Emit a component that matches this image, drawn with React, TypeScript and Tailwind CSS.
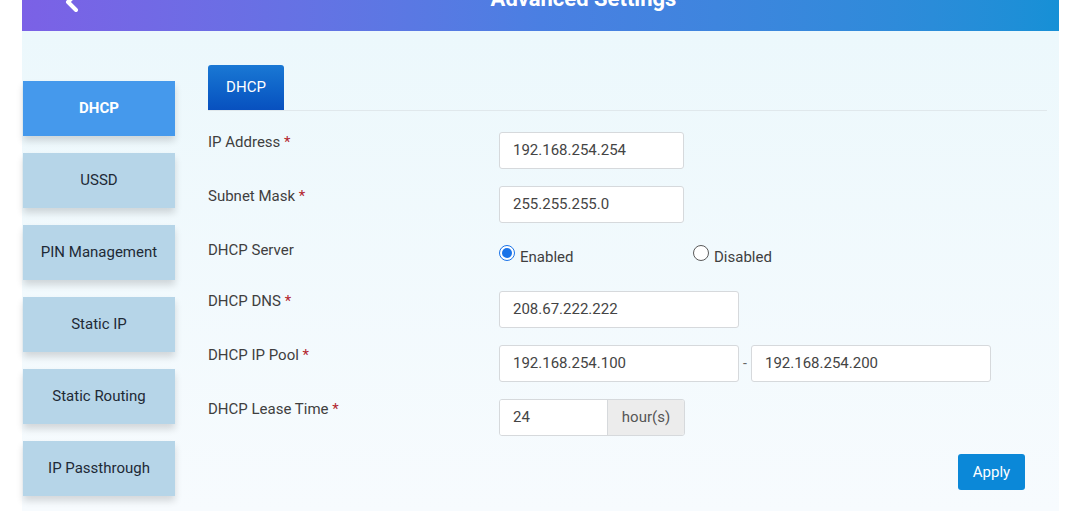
import { ChevronLeft } from "lucide-react";

const menu = ["DHCP", "USSD", "PIN Management", "Static IP", "Static Routing", "IP Passthrough"];

function Label({ text, required }: { text: string; required?: boolean }) {
  return (
    <div className="w-[291px] shrink-0 text-[15px] leading-5 text-[#3f3f3f]">
      {text}
      {required && <span className="text-[#b3262e]"> *</span>}
    </div>
  );
}

function Field({ value, width }: { value: string; width: string }) {
  return (
    <div
      className={`${width} h-[37px] flex items-center px-[13px] bg-white border border-[#d6d9dc] rounded-[3px] text-[15px] text-[#444]`}
    >
      {value}
    </div>
  );
}

function Radio({ checked, label }: { checked?: boolean; label: string }) {
  return (
    <div className="flex items-start gap-[5px]">
      <div
        className={`mt-[5px] w-[16px] h-[16px] rounded-full border flex items-center justify-center bg-white ${
          checked ? "border-[#1a73e8]" : "border-[#5a5a5a]"
        }`}
      >
        {checked && <div className="w-[10px] h-[10px] rounded-full bg-[#1a73e8]" />}
      </div>
      <span className="mt-[7px] text-[15px] leading-5 text-[#3f3f3f]">{label}</span>
    </div>
  );
}

export default function App() {
  return (
    <div className="w-[1079px] h-[511px] overflow-hidden bg-white font-['Roboto',sans-serif]">
      <div className="mx-[22px] w-[1037px]">
        {/* header, scrolled partly out of view */}
        <div className="-mt-[34px] h-[65px] relative flex items-center justify-center pl-[86px] bg-gradient-to-r from-[#7b61e6] via-[#4a7fe2] to-[#1690d6]">
          <ChevronLeft className="absolute left-[34px] top-[20px] text-white" size={32} strokeWidth={3} />
          <h1 className="text-[22px] font-bold text-white">Advanced Settings</h1>
        </div>

        <div className="h-[480px] bg-gradient-to-b from-[#ecf8fc] to-[#f7fbfe] flex">
          {/* side menu */}
          <div className="w-[153px] pl-px pt-[50px] flex flex-col gap-[17px]">
            {menu.map((m, i) => (
              <div
                key={m}
                className={`h-[55px] flex items-center justify-center text-[15px] shadow-[0_5px_7px_rgba(0,0,0,0.14)] ${
                  i === 0 ? "bg-[#4599ec] text-white font-bold" : "bg-[#b6d5e8] text-[#1e2a36]"
                }`}
              >
                {m}
              </div>
            ))}
          </div>

          {/* content */}
          <div className="ml-[33px] w-[839px] pt-[34px] flex flex-col">
            <div className="flex border-b border-[#e0e8ec]">
              <div className="w-[76px] h-[45px] flex items-center justify-center rounded-t-[3px] bg-gradient-to-b from-[#1a78d4] to-[#0850bf] text-white text-[15px]">
                DHCP
              </div>
            </div>

            <div className="mt-[21px] flex flex-col gap-[17px]">
              <div className="flex">
                <Label text="IP Address" required />
                <Field value="192.168.254.254" width="w-[185px]" />
              </div>
              <div className="flex">
                <Label text="Subnet Mask" required />
                <Field value="255.255.255.0" width="w-[185px]" />
              </div>
              <div className="flex h-[34px]">
                <Label text="DHCP Server" />
                <div className="w-[194px]">
                  <Radio checked label="Enabled" />
                </div>
                <Radio label="Disabled" />
              </div>
              <div className="flex">
                <Label text="DHCP DNS" required />
                <Field value="208.67.222.222" width="w-[240px]" />
              </div>
              <div className="flex">
                <Label text="DHCP IP Pool" required />
                <Field value="192.168.254.100" width="w-[240px]" />
                <span className="w-[12px] text-center text-[14px] leading-[37px] text-[#666]">-</span>
                <Field value="192.168.254.200" width="w-[240px]" />
              </div>
              <div className="flex">
                <Label text="DHCP Lease Time" required />
                <div className="flex h-[37px] border border-[#d6d9dc] rounded-[3px] overflow-hidden text-[15px] text-[#444]">
                  <div className="w-[107px] bg-white flex items-center px-[13px]">24</div>
                  <div className="w-[77px] bg-[#ececec] border-l border-[#d6d9dc] flex items-center justify-center text-[#555]">
                    hour(s)
                  </div>
                </div>
              </div>
            </div>

            <div className="mt-[18px] flex justify-end pr-[22px]">
              <button className="w-[67px] h-[36px] rounded-[3px] bg-[#0b88d8] text-white text-[15px]">Apply</button>
            </div>
          </div>
        </div>
      </div>
    </div>
  );
}
